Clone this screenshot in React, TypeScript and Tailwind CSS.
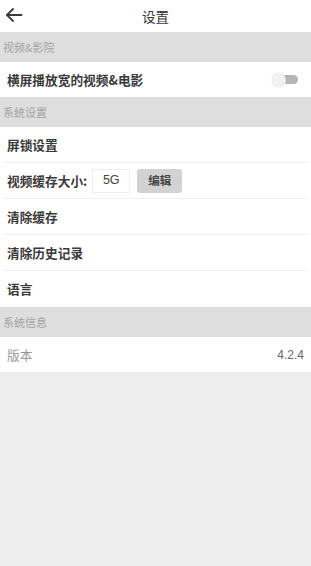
import { useState } from 'react';

const font = { fontFamily: '"Noto Sans CJK SC", "Liberation Sans", sans-serif' };

function SectionHeader({ title }: { title: string }) {
    return (
        <div className="h-[30px] bg-[#dedede] flex items-center pl-[3px] text-[11px] text-[#a3a3a3]">
            {title}
        </div>
    );
}

function Row({ children, divider = true }: { children: React.ReactNode; divider?: boolean }) {
    return (
        <div className="bg-white px-[3px]">
            <div className={`h-[36px] flex items-center pl-[4px] pr-[4px] ${divider ? 'border-b border-[#f0f0f0]' : ''}`}>
                {children}
            </div>
        </div>
    );
}

export default function App() {
    const [landscape, setLandscape] = useState(false);
    const [cacheSize] = useState('5G');

    return (
        <div className="w-[311px] h-[566px] bg-[#ededed] flex flex-col" style={font}>
            {/* Header */}
            <div className="h-[32px] bg-white relative flex items-center justify-center">
                <button className="absolute left-[5px] top-[7px] text-[#333]">
                    <svg width="18" height="16" viewBox="0 0 18 16" fill="none" stroke="#3a3a3a" strokeWidth="1.8" strokeLinecap="round" strokeLinejoin="round">
                        <path d="M16.5 8H2" />
                        <path d="M8 2L2 8l6 6" />
                    </svg>
                </button>
                <span className="text-[13.5px] text-[#333]">设置</span>
            </div>

            <SectionHeader title="视频&影院" />
            <div className="bg-white h-[35px] flex items-center justify-between pl-[7px] pr-[13px]">
                <span className="text-[12.7px] font-bold text-[#3a3a3a]">横屏播放宽的视频&电影</span>
                <button onClick={() => setLandscape(!landscape)} className="relative w-[26px] h-[14px] flex items-center">
                    <span className="absolute right-0 w-[18px] h-[9px] rounded-full bg-[#b5b5b5]" />
                    <span className="absolute left-0 w-[14px] h-[14px] rounded-full bg-[#f2f2f2] shadow-[0_0_2px_rgba(0,0,0,0.15)]" />
                </button>
            </div>

            <SectionHeader title="系统设置" />
            <Row>
                <span className="text-[12.7px] font-bold text-[#3a3a3a]">屏锁设置</span>
            </Row>
            <Row>
                <span className="text-[12.7px] font-bold text-[#3a3a3a]">视频缓存大小:</span>
                <div className="ml-[5px] w-[38px] h-[24px] border border-[#eeeeee] bg-white flex items-center justify-center text-[12.5px] text-[#444]" style={{ fontFamily: '"Liberation Sans", sans-serif' }}>
                    {cacheSize}
                </div>
                <button className="ml-[7px] w-[45px] h-[24px] rounded-[3px] bg-[#d2d2d2] text-[11.5px] font-bold text-[#444] flex items-center justify-center">
                    编辑
                </button>
            </Row>
            <Row>
                <span className="text-[12.7px] font-bold text-[#3a3a3a]">清除缓存</span>
            </Row>
            <Row>
                <span className="text-[12.7px] font-bold text-[#3a3a3a]">清除历史记录</span>
            </Row>
            <Row divider={false}>
                <span className="text-[12.7px] font-bold text-[#3a3a3a]">语言</span>
            </Row>

            <SectionHeader title="系统信息" />
            <div className="bg-white h-[35px] flex items-center justify-between pl-[7px] pr-[7px]">
                <span className="text-[12.7px] text-[#999]">版本</span>
                <span className="text-[12px] text-[#666]" style={{ fontFamily: '"Liberation Sans", sans-serif' }}>4.2.4</span>
            </div>
        </div>
    );
}
